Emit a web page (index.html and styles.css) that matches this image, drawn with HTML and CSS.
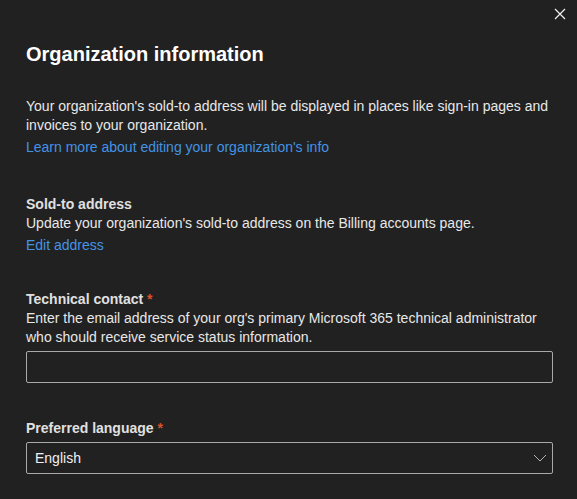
FILE: index.html
```html
<!DOCTYPE html>
<html lang="en">

<head>
    <meta charset="UTF-8">
    <meta name="viewport" content="width=device-width, initial-scale=1.0">
    <title>Organization information</title>
    <link rel="stylesheet" href="styles.css">
</head>

<body>

    <div class="panel">
        <button class="close" aria-label="Close">
            <svg width="12" height="12" viewBox="0 0 12 12">
                <path d="M1 1 L11 11 M11 1 L1 11" stroke="#f2f2f2" stroke-width="1.2" fill="none" />
            </svg>
        </button>

        <h1>Organization information</h1>

        <!-- intro -->
        <div class="intro">
            <p>Your organization's sold-to address will be displayed in places like sign-in pages and invoices to your organization.</p>
            <a href="#" class="link">Learn more about editing your organization's info</a>
        </div>

        <!-- sold-to -->
        <div class="section">
            <div class="label">Sold-to address</div>
            <p>Update your organization's sold-to address on the Billing accounts page.</p>
            <a href="#" class="link">Edit address</a>
        </div>

        <!-- technical contact -->
        <div class="section field">
            <div class="label">Technical contact <span class="req">*</span></div>
            <p>Enter the email address of your org's primary Microsoft 365 technical administrator who should receive service status information.</p>
            <div class="textbox"></div>
        </div>

        <!-- language -->
        <div class="section lang">
            <div class="label">Preferred language <span class="req">*</span></div>
            <div class="dropdown">
                <span>English</span>
                <svg width="14" height="8" viewBox="0 0 14 8">
                    <path d="M1 1 L7 7 L13 1" stroke="#b4b4b4" stroke-width="1" fill="none" />
                </svg>
            </div>
        </div>
    </div>

</body>

</html>
```

FILE: styles.css
```css
body {
    margin: 0;
    background-color: #212121;
    font-family: "Segoe UI", "Liberation Sans", Arial, sans-serif;
    color: #e8e8e8;
    font-size: 14px;
}

.panel {
    position: relative;
    height: 499px;
    padding: 0 24px 0 26px;
    overflow: hidden;
}

.close {
    position: absolute;
    top: 7px;
    right: 10px;
    background: none;
    border: none;
    padding: 0;
    width: 14px;
    height: 14px;
    display: flex;
    align-items: center;
    justify-content: center;
}

h1 {
    margin: 0;
    padding-top: 41px;
    font-size: 20px;
    line-height: 27px;
    font-weight: bold;
    color: #ffffff;
}

p {
    margin: 0;
    line-height: 19px;
}

.intro {
    margin-top: 29px;
}

.link {
    display: block;
    margin-top: 3px;
    line-height: 19px;
    color: #4493e4;
    text-decoration: none;
}

.section {
    margin-top: 38px;
}

.label {
    font-weight: bold;
    line-height: 19px;
    color: #e0e0e0;
}

.req {
    color: #d9512c;
}

.field {
    margin-top: 35px;
}

.textbox {
    margin-top: 4px;
    height: 30px;
    border: 1px solid #a9a9a9;
    border-radius: 2px;
}

.lang {
    margin-top: 36px;
}

.dropdown {
    margin-top: 4px;
    height: 30px;
    border: 1px solid #a9a9a9;
    border-radius: 2px;
    display: flex;
    align-items: center;
    justify-content: space-between;
    padding: 0 5px 0 8px;
    color: #f0f0f0;
}
```
